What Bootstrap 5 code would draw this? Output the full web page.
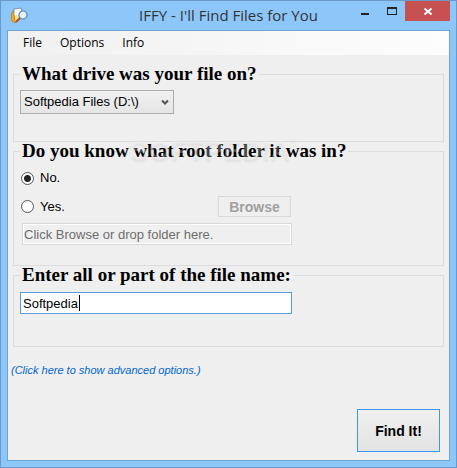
<!DOCTYPE html>
<html lang="en">
<head>
<meta charset="utf-8">
<meta name="viewport" content="width=device-width, initial-scale=1">
<title>IFFY - I'll Find Files for You</title>
<link href="https://cdn.jsdelivr.net/npm/bootstrap@5.3.0/dist/css/bootstrap.min.css" rel="stylesheet">
<style>
  body { font: 13px/18px "Liberation Sans", Arial, sans-serif; color: #000; background: #8dc7fa; }
  .app-window { border: 1px solid #6a9ac7; padding: 0 6px 6px; background: #8dc7fa; }
  .title-bar { height: 29px; }
  .title-side { flex: 1 1 0; }
  .title-text { font: 15px/29px "Open Sans", "Noto Sans", sans-serif; color: #333; }
  .win-btn { border: 0; padding: 0; background: none; width: 26px; height: 20px; line-height: 0; }
  .win-close { width: 45px; background: #c75050; }
  .client { border: 1px solid #6fa5d6; background: #efefef; }
  .menu-strip { height: 24px; padding-left: 8px; background: linear-gradient(90deg, #f0f0f0, #fdfdfd); }
  .menu-strip .nav-link { font: 12px/24px "Open Sans", "Noto Sans", sans-serif; color: #000; padding: 0 7px; }
  .form-area { padding: 10px 5px 8px; }
  .group { border: 1px solid #dcdcdc; padding: 0 6px; }
  .group legend { font: bold 19px/18px "Liberation Serif", Georgia, serif; margin: 0; padding: 0 2px; white-space: nowrap; }
  .group-drive { height: 77px; }
  .group-folder { height: 124px; }
  .group-name { height: 81px; }
  .drive-select { display: block; appearance: none; width: 154px; height: 24px; margin-top: 7px; padding: 0 18px 0 3px; border: 1px solid #acacac; border-radius: 0; color: #000; font-size: 13px;
    background: url("data:image/svg+xml,%3Csvg xmlns='http://www.w3.org/2000/svg' width='8' height='7'%3E%3Cpath d='M1 1.5L4 4.5L7 1.5' fill='none' stroke='%23555' stroke-width='2'/%3E%3C/svg%3E") no-repeat right 4px center, linear-gradient(#f0f0f0, #e5e5e5); }
  .radio-row { height: 20px; gap: 6px; padding-left: 1px; }
  .radio-row .form-check-input { width: 13px; height: 13px; margin: 0; border: 1px solid #555; background: #fff; box-shadow: none; }
  .radio-row .form-check-input:checked { background: radial-gradient(circle, #222 0 3px, #fff 4px); }
  .folder-row { max-width: 271px; }
  .browse-btn { width: 73px; height: 21px; padding: 0; border: 1px solid #d9d9d9; background: #efefef; color: #a0a0a0; font-weight: bold; font-size: 14px; line-height: 18px; }
  .field { display: block; width: 272px; max-width: 100%; height: 22px; padding: 0 2px; border: 1px solid #569de5; border-radius: 0; color: #000; font-size: 13px; }
  .folder-field { width: 270px; margin: 6px 0 0 2px; padding: 0 1px; border-color: #d9d9d9; background: #efefef; box-shadow: inset 0 0 0 1px #fff; }
  .folder-field::placeholder { color: #6d6d6d; opacity: 1; }
  .name-field { margin-top: 8px; background: linear-gradient(#000, #000) 58px 2px / 1px 16px no-repeat, #fff; outline: 0; }
  .adv-link { font: italic 11px/16px "Liberation Sans", Arial, sans-serif; color: #0066cc; text-decoration: none; margin: 15px 0 0 -2px; align-self: flex-start; }
  .find-btn { width: 83px; height: 43px; border: 1px solid #3c97f0; background: linear-gradient(#f0f0f0, #e3e3e3); font-weight: bold; font-size: 14px; padding: 0; color: #000; margin-right: 4px; }
  .watermark { left: 129px; top: 134px; font: bold 28px/32px "Liberation Sans", Arial, sans-serif; color: rgba(244,244,244,.3); text-shadow: 0 2px 2px rgba(0,0,0,.06); pointer-events: none; }
  .watermark sup { font-size: 14px; top: -12px; }
</style>
<script src="https://cdn.jsdelivr.net/npm/bootstrap@5.3.0/dist/js/bootstrap.bundle.min.js"></script>
</head>
<body>
<div class="app-window d-flex flex-column min-vh-100 position-relative">
  <header class="title-bar d-flex">
    <div class="title-side d-flex align-items-center">
      <svg class="ms-1 ps-0" width="18" height="18" viewBox="0 0 18 18" aria-hidden="true">
        <path d="M1 5L5 3L6 12L4 16L0 13Z" fill="#f1b02c" stroke="#a66a22" stroke-width=".7"/>
        <path d="M3 2L10 1L11 9L5 12L3 9Z" fill="#f8fafc" stroke="#74818f" stroke-width=".8"/>
        <path d="M3 8L4 15L8 12L9 8" fill="#ffe18a" stroke="#cf861d" stroke-width="1"/>
        <path d="M9 11L5 15" stroke="#a94f24" stroke-width="1.8"/>
        <circle cx="12" cy="8" r="4" fill="#dff4ff" stroke="#5583b0" stroke-width="1.2"/>
        <path d="M10 7Q11 5 13 6" fill="none" stroke="#fff" stroke-width="1.3"/>
      </svg>
    </div>
    <div class="title-text">IFFY - I'll Find Files for You</div>
    <div class="title-side d-flex justify-content-end">
      <button class="win-btn" type="button" aria-label="Minimize"><svg width="26" height="20"><path d="M8 12h8v2H8z" fill="#222"/></svg></button>
      <button class="win-btn" type="button" aria-label="Maximize"><svg width="26" height="20"><path d="M8 6h10v8H8zM9 8v5h8V8z" fill="#222" fill-rule="evenodd"/></svg></button>
      <button class="win-btn win-close" type="button" aria-label="Close"><svg width="45" height="20"><path d="M19.500 7.500L26.500 13.500M26.500 7.500L19.500 13.500" stroke="#fff" stroke-width="2"/></svg></button>
    </div>
  </header>
  <main class="client d-flex flex-column flex-grow-1">
    <nav class="menu-strip nav flex-nowrap">
      <a class="nav-link me-1" href="#">File</a>
      <a class="nav-link me-1" href="#">Options</a>
      <a class="nav-link" href="#">Info</a>
    </nav>
    <form class="form-area d-flex flex-column flex-grow-1">
      <fieldset class="group group-drive">
        <legend class="float-none w-auto"><label for="drive">What drive was your file on?</label></legend>
        <select class="drive-select" id="drive"><option>Softpedia Files (D:\)</option></select>
      </fieldset>
      <fieldset class="group group-folder">
        <legend class="float-none w-auto">Do you know what root folder it was in?</legend>
        <div class="radio-row d-flex align-items-center mt-2">
          <input class="form-check-input" type="radio" name="root" id="rootNo" checked><label for="rootNo">No.</label>
        </div>
        <div class="folder-row d-flex align-items-center justify-content-between mt-2">
          <div class="radio-row d-flex align-items-center">
            <input class="form-check-input" type="radio" name="root" id="rootYes"><label for="rootYes">Yes.</label>
          </div>
          <button class="browse-btn" type="button" disabled>Browse</button>
        </div>
        <input class="field folder-field" type="text" aria-label="Root folder" placeholder="Click Browse or drop folder here." disabled>
      </fieldset>
      <fieldset class="group group-name">
        <legend class="float-none w-auto"><label for="fileName">Enter all or part of the file name:</label></legend>
        <input class="field name-field" id="fileName" type="text" value="Softpedia">
      </fieldset>
      <a class="adv-link" href="#">(Click here to show advanced options.)</a>
      <div class="d-flex justify-content-end mt-auto"><button class="find-btn" type="button">Find It!</button></div>
    </form>
  </main>
  <div class="watermark position-absolute" aria-hidden="true">SOFTPEDIA<sup>°</sup></div>
</div>
</body>
</html>
